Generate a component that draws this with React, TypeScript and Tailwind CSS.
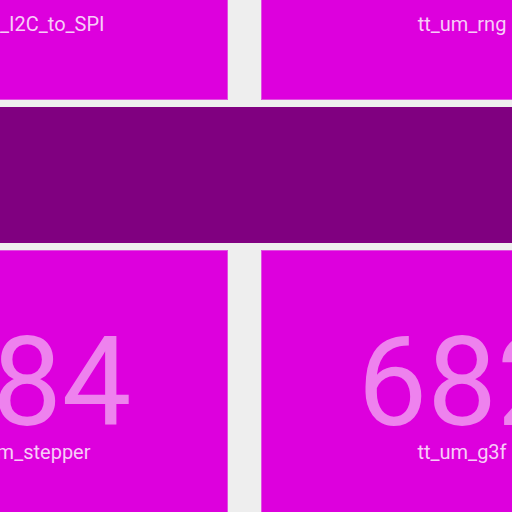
export default function App() {
  const tiles = [
    { value: "", name: "tt_um_I2C_to_SPI" },
    { value: "", name: "tt_um_rng" },
  ];
  const bottom = [
    { value: "584", name: "tt_um_stepper" },
    { value: "682", name: "tt_um_g3f" },
  ];

  const Tile = ({ value, name }: { value: string; name: string }) => (
    <div className="flex h-[278px] flex-col items-center border border-[#e150e1] bg-[#dd00dd] pt-[70px]">
      <div className="h-[124px] text-[124px] leading-none text-[#ee82ee]">{value}</div>
      <div className="mt-[-3px] whitespace-nowrap text-[20px] leading-none text-[#f8ccf8]">{name}</div>
    </div>
  );

  return (
    <div
      className="h-[512px] w-[512px] overflow-hidden bg-[#eeeeee]"
      style={{ fontFamily: "Roboto, 'Liberation Sans', sans-serif" }}
    >
      <div className="ml-[-174px] mt-[-178px] grid w-[837px] grid-cols-[402px_402px] gap-x-[33px] gap-y-[7px]">
        {tiles.map((t) => (
          <Tile key={t.name} {...t} />
        ))}
        {/* section header bar */}
        <div className="col-span-2 ml-[-20px] h-[136px] w-[877px] bg-[#800080]" />
        {bottom.map((t) => (
          <Tile key={t.name} {...t} />
        ))}
      </div>
    </div>
  );
}
